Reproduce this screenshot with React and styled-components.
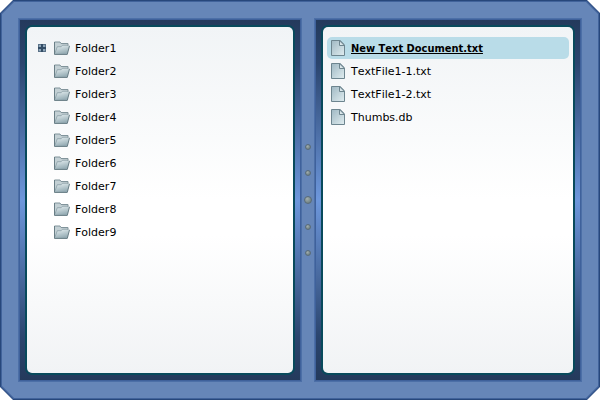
import React, { useState } from "react";
import styled, { createGlobalStyle } from "styled-components";

const GlobalStyle = createGlobalStyle`
  *, *::before, *::after { box-sizing: border-box; }
  body {
    margin: 0;
    background: #fff;
    font: 11px/15px "DejaVu Sans", Verdana, sans-serif;
    font-kerning: none;
    color: #000;
  }
`;

const chamfer = (size) => `polygon(
  ${size}px 0, calc(100% - ${size}px) 0, 100% ${size}px, 100% calc(100% - ${size}px),
  calc(100% - ${size}px) 100%, ${size}px 100%, 0 calc(100% - ${size}px), 0 ${size}px)`;

const Rim = styled.main`
  display: flex;
  min-height: 100vh;
  padding: 1px;
  background: #27477b;
  clip-path: ${chamfer(13)};
`;

const Bevel = styled.div`
  display: flex;
  flex: 1;
  padding: 1px;
  background: #41639b;
  clip-path: ${chamfer(12)};
`;

const Frame = styled.div`
  display: grid;
  flex: 1;
  grid-template-columns: minmax(0, 284fr) 12px minmax(0, 268fr);
  padding: 16px;
  background: #6686b8;
  clip-path: ${chamfer(12)};
`;

const Well = styled.section`
  display: flex;
  min-width: 0;
  padding: 7px;
  border: 2px solid #3f619b;
  outline: 1px solid #4c6fa7;
  outline-offset: -1px;
  background: linear-gradient(#243a5c, #2b456e 12%, #6d97dc 50%, #2b456e 88%, #243a5c);
`;

const Sheet = styled.div`
  flex: 1;
  min-width: 0;
  padding: ${(p) => p.$inset};
  border-radius: 5px;
  background: linear-gradient(#f1f4f6, #fff 50%, #fff 60%, #f1f3f5);
  box-shadow: 0 0 0 2px #084a5c;
`;

const Splitter = styled.div`
  display: flex;
  flex-direction: column;
  align-items: center;
  justify-content: center;
  gap: 20px;
`;

const Dot = styled.span`
  width: ${(p) => (p.$large ? 8 : 6)}px;
  height: ${(p) => (p.$large ? 8 : 6)}px;
  border: 1px solid #596b78;
  border-radius: 50%;
  background: radial-gradient(circle at 35% 30%, #a3afaf, #708283 75%);
`;

const List = styled.ul`
  display: flex;
  flex-direction: column;
  gap: 1px;
  margin: 0;
  padding: 0;
  list-style: none;
`;

const TreeRow = styled.li`
  display: grid;
  grid-template-columns: 8px 16px 1fr;
  column-gap: 8px;
  align-items: center;
  height: 22px;
`;

const Expander = styled.button`
  display: flex;
  padding: 0;
  border: 0;
  background: none;
`;

const ItemButton = styled.button`
  display: flex;
  align-items: center;
  gap: ${(p) => p.$gap}px;
  grid-column: 2 / -1;
  width: 100%;
  height: 22px;
  padding: 0 ${(p) => p.$pad || 0}px;
  border: 0;
  border-radius: 5px;
  background: ${(p) => (p.$selected ? "#b9dce8" : "none")};
  color: inherit;
  font: inherit;
  font-kerning: inherit;
  text-align: left;
  white-space: nowrap;
`;

const Label = styled.span`
  padding-top: 1px;
  font-family: ${(p) => (p.$selected ? '"DejaVu Sans Condensed", "DejaVu Sans", sans-serif' : "inherit")};
  font-weight: ${(p) => (p.$selected ? "bold" : "normal")};
  text-decoration: ${(p) => (p.$selected ? "underline" : "none")};
`;

const Icon = styled.svg`
  display: block;
  flex: none;
`;

const PlusIcon = () => (
  <Icon width="8" height="8" viewBox="0 0 8 8" aria-hidden="true">
    <path d="M0 0h8v8H0z" fill="#5a7288" />
    <path d="M1 1h2v2H1zM5 1h2v2H5zM1 5h2v2H1zM5 5h2v2H5z" fill="#8fa7ba" />
    <path d="M3 0h2v8H3zM0 3h8v2H0z" fill="#334d66" />
  </Icon>
);

const FolderIcon = () => (
  <Icon width="16" height="14" viewBox="0 0 16 14" aria-hidden="true">
    <defs>
      <linearGradient id="folderFront" x1="0" y1="0" x2="0.4" y2="1">
        <stop offset="0" stopColor="#e6eff1" />
        <stop offset="1" stopColor="#95acb4" />
      </linearGradient>
    </defs>
    <path d="M.5 13V1h5.5l1 1.5h7V5L13 13z" fill="#c3d0d4" stroke="#81949b" />
    <path d="M.6 13.2 3.3 6.2h4L8.7 4.7h6.8l-2.2 8.5z" fill="url(#folderFront)" />
    <path d="M1 12 3.3 5.7h3.8l1.4-1.5h5.8" fill="none" stroke="#8b9fa7" strokeWidth=".8" />
    <path d="M.5 1v12.4h12.8L15.5 4.8" fill="none" stroke="#697e86" />
  </Icon>
);

const FileIcon = () => (
  <Icon width="14" height="16" viewBox="0 0 14 16" aria-hidden="true">
    <defs>
      <linearGradient id="page" x1="0" y1="0" x2="1" y2="1">
        <stop offset="0" stopColor="#9fb8c3" />
        <stop offset="1" stopColor="#e0edf0" />
      </linearGradient>
    </defs>
    <path d="M.5.5h8.7l4.3 4.3v10.7H.5z" fill="url(#page)" stroke="#6d858f" />
    <path d="M8.5.7v4.8h4.8z" fill="#dce8ec" stroke="#6d858f" />
  </Icon>
);

const folders = [1, 2, 3, 4, 5, 6, 7, 8, 9].map((n) => `Folder${n}`);
const files = ["New Text Document.txt", "TextFile1-1.txt", "TextFile1-2.txt", "Thumbs.db"];

export default function App() {
  const [selected, setSelected] = useState(files[0]);
  return (
    <>
      <GlobalStyle />
      <Rim>
        <Bevel>
          <Frame>
            <Well aria-label="Folders">
              <Sheet $inset="10px 4px 10px 11px">
                <List>
                  {folders.map((name, i) => (
                    <TreeRow key={name}>
                      {i === 0 && <Expander type="button" aria-label={`Expand ${name}`}><PlusIcon /></Expander>}
                      <ItemButton type="button" $gap={5}><FolderIcon /><Label>{name}</Label></ItemButton>
                    </TreeRow>
                  ))}
                </List>
              </Sheet>
            </Well>
            <Splitter role="separator" aria-orientation="vertical">
              <Dot /><Dot /><Dot $large /><Dot /><Dot />
            </Splitter>
            <Well aria-label="Files">
              <Sheet $inset="10px 4px">
                <List>
                  {files.map((name) => (
                    <li key={name}>
                      <ItemButton
                        type="button"
                        $gap={6}
                        $pad={4}
                        $selected={name === selected}
                        aria-pressed={name === selected}
                        onClick={() => setSelected(name)}
                      >
                        <FileIcon /><Label $selected={name === selected}>{name}</Label>
                      </ItemButton>
                    </li>
                  ))}
                </List>
              </Sheet>
            </Well>
          </Frame>
        </Bevel>
      </Rim>
    </>
  );
}
